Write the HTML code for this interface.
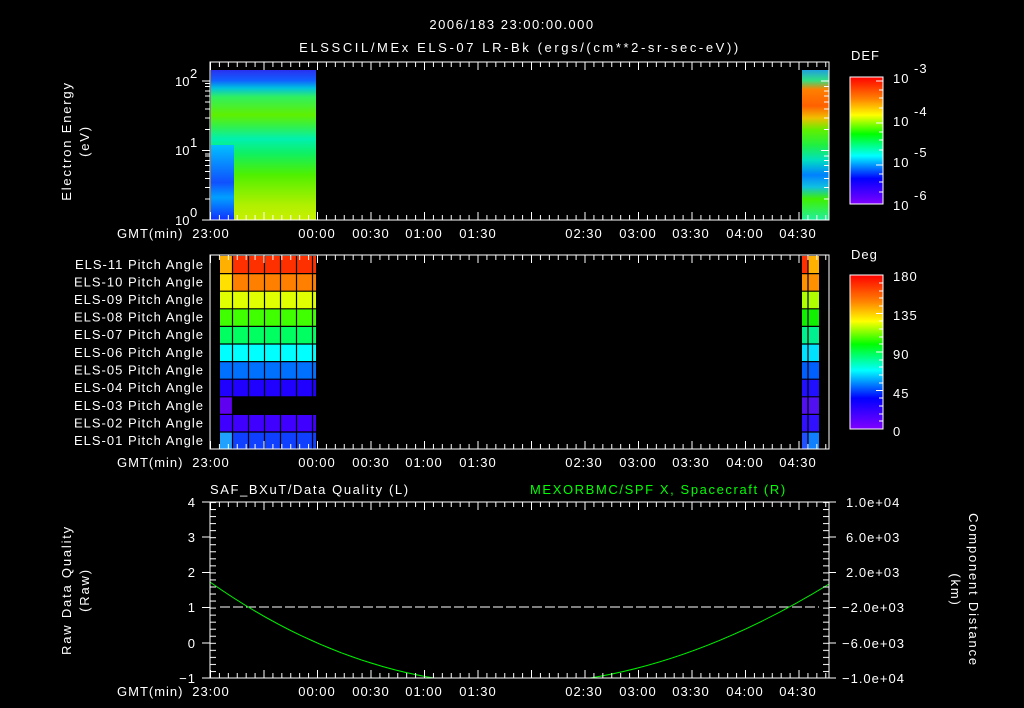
<!DOCTYPE html>
<html><head><meta charset="utf-8"><style>
html,body{margin:0;padding:0;background:#000;width:1024px;height:708px;overflow:hidden}
svg{display:block}
text{font-family:"Liberation Sans",sans-serif;fill:#fff;font-size:13px;letter-spacing:1px}
</style></head><body>
<svg width="1024" height="708" viewBox="0 0 1024 708" xmlns="http://www.w3.org/2000/svg">
<defs>
<pattern id="tkTop" x="210" y="0" width="8.917" height="10" patternUnits="userSpaceOnUse"><line x1="0.5" y1="0" x2="0.5" y2="10" stroke="#fff" stroke-width="1"/></pattern>
<pattern id="tkMaj" x="210" y="0" width="53.5" height="20" patternUnits="userSpaceOnUse"><line x1="0.5" y1="0" x2="0.5" y2="20" stroke="#fff" stroke-width="1"/></pattern>
<pattern id="tkV" x="0" y="502" width="10" height="7.04" patternUnits="userSpaceOnUse"><line x1="0" y1="0.5" x2="10" y2="0.5" stroke="#fff"/></pattern>
<linearGradient id="specL" x1="0" y1="0" x2="0" y2="1">
<stop offset="0" stop-color="#2a30f0"/><stop offset="0.07" stop-color="#1060ff"/><stop offset="0.12" stop-color="#00c0e0"/><stop offset="0.18" stop-color="#30f060"/><stop offset="0.3" stop-color="#60f000"/><stop offset="0.38" stop-color="#30f050"/><stop offset="0.46" stop-color="#00f0b0"/><stop offset="0.56" stop-color="#10f060"/><stop offset="0.7" stop-color="#50f000"/><stop offset="0.9" stop-color="#b0f000"/><stop offset="1" stop-color="#c8f000"/></linearGradient>
<linearGradient id="specS" x1="0" y1="0" x2="0" y2="1"><stop offset="0" stop-color="#00c0ff"/><stop offset="0.5" stop-color="#1050ff"/><stop offset="0.7" stop-color="#00a0ff"/><stop offset="1" stop-color="#1030ff"/></linearGradient>
<linearGradient id="specR" x1="0" y1="0" x2="0" y2="1">
<stop offset="0" stop-color="#20a0e0"/><stop offset="0.07" stop-color="#30e080"/><stop offset="0.13" stop-color="#ff8000"/><stop offset="0.24" stop-color="#ff6000"/><stop offset="0.32" stop-color="#f0c000"/><stop offset="0.4" stop-color="#60f000"/><stop offset="0.5" stop-color="#20f040"/><stop offset="0.6" stop-color="#00e0c0"/><stop offset="0.7" stop-color="#0080ff"/><stop offset="0.78" stop-color="#10c0e0"/><stop offset="0.86" stop-color="#40f000"/><stop offset="1" stop-color="#20f0a0"/></linearGradient>
<linearGradient id="rb" x1="0" y1="0" x2="0" y2="1">
<stop offset="0" stop-color="#ff0000"/><stop offset="0.17" stop-color="#ff8000"/><stop offset="0.3" stop-color="#ffff00"/><stop offset="0.45" stop-color="#00ff00"/><stop offset="0.62" stop-color="#00ffff"/><stop offset="0.8" stop-color="#0000ff"/><stop offset="1" stop-color="#8000ff"/></linearGradient>
<clipPath id="bclip"><rect x="210" y="502" width="619" height="176"/></clipPath>
</defs>

<text x="512" y="29" text-anchor="middle" font-size="17" style="letter-spacing:1.5px">2006/183 23:00:00.000</text>
<text x="520" y="52" text-anchor="middle" font-size="17" style="letter-spacing:2.6px">ELSSCIL/MEx ELS-07 LR-Bk  (ergs/(cm**2-sr-sec-eV))</text>

<rect x="211" y="70" width="105" height="150" fill="url(#specL)"/>
<rect x="211" y="145" width="23" height="75" fill="url(#specS)"/>
<rect x="802" y="70" width="27" height="150" fill="url(#specR)"/>
<rect x="210" y="62" width="619" height="158" fill="none" stroke="#fff"/>
<rect x="210" y="62" width="619" height="5" fill="url(#tkTop)"/>
<rect x="210" y="62" width="619" height="8" fill="url(#tkMaj)"/>
<rect x="210" y="215" width="619" height="5" fill="url(#tkTop)"/>
<rect x="210" y="212" width="619" height="8" fill="url(#tkMaj)"/>
<g stroke="#fff">
<line x1="202" y1="220" x2="210" y2="220"/><line x1="202" y1="150.5" x2="210" y2="150.5"/><line x1="202" y1="81" x2="210" y2="81"/>
<path d="M205 199h5M205 187.5h5M205 178.5h5M205 171.5h5M205 165.5h5M205 160.5h5M205 156h5M205 154h5M205 129.5h5M205 118h5M205 109h5M205 102h5M205 96h5M205 91h5M205 86.5h5M205 83.5h5"/>
<path d="M821 81h8M821 150.5h8M824 129.5h5M824 118h5M824 109h5M824 102h5M824 96h5M824 91h5M824 86.5h5M824 199h5M824 187.5h5M824 178.5h5M824 171.5h5M824 165.5h5M824 160.5h5M824 156h5"/>
</g>
<text x="175" y="225" font-size="13" style="letter-spacing:0">10</text><text x="190" y="217" font-size="9">0</text>
<text x="175" y="155" font-size="13" style="letter-spacing:0">10</text><text x="190" y="147" font-size="9">1</text>
<text x="175" y="86" font-size="13" style="letter-spacing:0">10</text><text x="190" y="78" font-size="9">2</text>
<text transform="translate(71,141) rotate(-90)" text-anchor="middle" font-size="14" style="letter-spacing:1.8px">Electron Energy</text>
<text transform="translate(89,141) rotate(-90)" text-anchor="middle" font-size="14" style="letter-spacing:1.8px">(eV)</text>
<g font-size="13">
<text x="117" y="238">GMT(min)</text>
<text x="211" y="238" text-anchor="middle">23:00</text>
<text x="317" y="238" text-anchor="middle">00:00</text>
<text x="371" y="238" text-anchor="middle">00:30</text>
<text x="424" y="238" text-anchor="middle">01:00</text>
<text x="478" y="238" text-anchor="middle">01:30</text>
<text x="584" y="238" text-anchor="middle">02:30</text>
<text x="638" y="238" text-anchor="middle">03:00</text>
<text x="691" y="238" text-anchor="middle">03:30</text>
<text x="745" y="238" text-anchor="middle">04:00</text>
<text x="798" y="238" text-anchor="middle">04:30</text>
</g>
<text x="851" y="60" font-size="16">DEF</text>
<rect x="850" y="77" width="33" height="127" fill="url(#rb)" stroke="#fff"/>
<g stroke="#fff"><path d="M876 81h7M876 123h7M876 165h7M879 90h4M879 98h4M879 108h4M879 132h4M879 140h4M879 150h4M879 174h4M879 182h4M879 192h4"/></g>
<g font-size="17"><text x="893" y="83">10</text><text x="914" y="73" font-size="11">-3</text>
<text x="893" y="126">10</text><text x="914" y="116" font-size="11">-4</text>
<text x="893" y="167">10</text><text x="914" y="157" font-size="11">-5</text>
<text x="893" y="210">10</text><text x="914" y="200" font-size="11">-6</text></g>

<g>
<rect x="220" y="256" width="96" height="17.6" fill="#ff3000"/>
<rect x="220" y="273.6" width="96" height="17.6" fill="#ff8000"/>
<rect x="220" y="291.2" width="96" height="17.6" fill="#e0ff00"/>
<rect x="220" y="308.8" width="96" height="17.6" fill="#40ff00"/>
<rect x="220" y="326.4" width="96" height="17.6" fill="#00ff60"/>
<rect x="220" y="344" width="96" height="17.6" fill="#00ffff"/>
<rect x="220" y="361.6" width="96" height="17.6" fill="#0070ff"/>
<rect x="220" y="379.2" width="96" height="17.6" fill="#2000ff"/>
<rect x="220" y="396.8" width="12" height="17.6" fill="#6000f0"/>
<rect x="220" y="414.4" width="96" height="17.6" fill="#4000ff"/>
<rect x="220" y="432" width="96" height="17" fill="#1040ff"/>
<rect x="220" y="256" width="12" height="17.6" fill="#ffb000"/>
<rect x="220" y="273.6" width="12" height="17.6" fill="#ffe000"/>
<rect x="220" y="432" width="12" height="17" fill="#20a0ff"/>
<g stroke="#000" stroke-width="1.2"><path d="M232.5 256V449M248.5 256V449M264.5 256V449M280.5 256V449M296.5 256V449M312.5 256V449"/>
<path d="M220 273.6h96M220 291.2h96M220 308.8h96M220 326.4h96M220 344h96M220 361.6h96M220 379.2h96M220 396.8h96M220 414.4h96M220 432h96"/></g>
<rect x="232.6" y="397.4" width="84" height="16.6" fill="#000"/>
</g>
<g>
<rect x="802" y="256" width="17" height="193" fill="#000"/>
<rect x="802" y="256" width="6" height="17.6" fill="#ff3000"/><rect x="808" y="256" width="11" height="17.6" fill="#ffb000"/>
<rect x="802" y="273.6" width="17" height="17.6" fill="#ff9000"/>
<rect x="802" y="291.2" width="17" height="17.6" fill="#b0ff00"/>
<rect x="802" y="308.8" width="17" height="17.6" fill="#10f000"/>
<rect x="802" y="326.4" width="17" height="17.6" fill="#00f090"/>
<rect x="802" y="344" width="17" height="17.6" fill="#00e0ff"/>
<rect x="802" y="361.6" width="17" height="17.6" fill="#0060ff"/>
<rect x="802" y="379.2" width="17" height="17.6" fill="#2010ff"/>
<rect x="802" y="396.8" width="17" height="17.6" fill="#5010f0"/>
<rect x="802" y="414.4" width="17" height="17.6" fill="#3010ff"/>
<rect x="802" y="432" width="6" height="17" fill="#2050ff"/><rect x="808" y="432" width="11" height="17" fill="#1080ff"/>
<g stroke="#000" stroke-width="1.2"><path d="M808 256V449M802 273.6h17M802 291.2h17M802 308.8h17M802 326.4h17M802 344h17M802 361.6h17M802 379.2h17M802 396.8h17M802 414.4h17M802 432h17"/></g>
</g>
<rect x="210" y="255" width="619" height="194" fill="none" stroke="#fff"/>
<rect x="210" y="255" width="619" height="5" fill="url(#tkTop)"/>
<rect x="210" y="255" width="619" height="8" fill="url(#tkMaj)"/>
<rect x="210" y="444" width="619" height="5" fill="url(#tkTop)"/>
<rect x="210" y="441" width="619" height="8" fill="url(#tkMaj)"/>
<g font-size="13" text-anchor="end" style="letter-spacing:1.1px">
<text x="204" y="269">ELS-11 Pitch Angle</text>
<text x="204" y="286.5">ELS-10 Pitch Angle</text>
<text x="204" y="304">ELS-09 Pitch Angle</text>
<text x="204" y="321.5">ELS-08 Pitch Angle</text>
<text x="204" y="339">ELS-07 Pitch Angle</text>
<text x="204" y="357">ELS-06 Pitch Angle</text>
<text x="204" y="374.5">ELS-05 Pitch Angle</text>
<text x="204" y="392">ELS-04 Pitch Angle</text>
<text x="204" y="410">ELS-03 Pitch Angle</text>
<text x="204" y="427.5">ELS-02 Pitch Angle</text>
<text x="204" y="445">ELS-01 Pitch Angle</text>
</g>
<g font-size="13">
<text x="117" y="467">GMT(min)</text>
<text x="211" y="467" text-anchor="middle">23:00</text>
<text x="317" y="467" text-anchor="middle">00:00</text>
<text x="371" y="467" text-anchor="middle">00:30</text>
<text x="424" y="467" text-anchor="middle">01:00</text>
<text x="478" y="467" text-anchor="middle">01:30</text>
<text x="584" y="467" text-anchor="middle">02:30</text>
<text x="638" y="467" text-anchor="middle">03:00</text>
<text x="691" y="467" text-anchor="middle">03:30</text>
<text x="745" y="467" text-anchor="middle">04:00</text>
<text x="798" y="467" text-anchor="middle">04:30</text>
</g>
<text x="851" y="259" font-size="16">Deg</text>
<rect x="850" y="275" width="33" height="154" fill="url(#rb)" stroke="#fff"/>
<g stroke="#fff"><path d="M876 313.5h7M876 352h7M876 390.5h7M879 283h4M879 291h4M879 298h4M879 306h4M879 321h4M879 329h4M879 337h4M879 344h4M879 360h4M879 367h4M879 375h4M879 383h4M879 398h4M879 406h4M879 414h4M879 421h4"/></g>
<g font-size="16"><text x="893" y="281">180</text><text x="893" y="320">135</text><text x="893" y="359">90</text><text x="893" y="398">45</text><text x="893" y="436">0</text></g>

<text x="210" y="494" font-size="15" style="letter-spacing:1.6px">SAF_BXuT/Data Quality (L)</text>
<text x="530" y="494" font-size="15" style="fill:#00ff00;letter-spacing:1.6px">MEXORBMC/SPF X, Spacecraft (R)</text>
<line x1="220" y1="607" x2="819" y2="607" stroke="#fff" stroke-dasharray="10,3"/>
<g clip-path="url(#bclip)"><path d="M210 582 Q 500 786 829 584" fill="none" stroke="#00ee00" stroke-width="1"/></g>
<rect x="210" y="502" width="619" height="176" fill="none" stroke="#fff"/>
<rect x="210" y="502" width="619" height="5" fill="url(#tkTop)"/>
<rect x="210" y="502" width="619" height="8" fill="url(#tkMaj)"/>
<rect x="210" y="673" width="619" height="5" fill="url(#tkTop)"/>
<rect x="210" y="670" width="619" height="8" fill="url(#tkMaj)"/>
<rect x="210" y="502" width="6" height="176" fill="url(#tkV)"/>
<rect x="823" y="502" width="6" height="176" fill="url(#tkV)"/>
<g stroke="#fff"><path d="M202 502h8M202 537h8M202 572.5h8M202 607.5h8M202 643h8M202 678h8M829 502h7M829 537h7M829 572.5h7M829 607.5h7M829 643h7M829 678h7"/></g>
<g font-size="13" text-anchor="end"><text x="196" y="507">4</text><text x="196" y="542">3</text><text x="196" y="577">2</text><text x="196" y="612">1</text><text x="196" y="648">0</text><text x="196" y="683">−1</text></g>
<g font-size="13"><text x="846" y="507">1.0e+04</text><text x="846" y="542">6.0e+03</text><text x="846" y="577">2.0e+03</text><text x="842" y="612">−2.0e+03</text><text x="842" y="648">−6.0e+03</text><text x="842" y="683">−1.0e+04</text></g>
<text transform="translate(71,590) rotate(-90)" text-anchor="middle" font-size="14" style="letter-spacing:1.8px">Raw Data Quality</text>
<text transform="translate(89,590) rotate(-90)" text-anchor="middle" font-size="14" style="letter-spacing:1.8px">(Raw)</text>
<text transform="translate(969,590) rotate(90)" text-anchor="middle" font-size="14" style="letter-spacing:1.8px">Component Distance</text>
<text transform="translate(951,590) rotate(90)" text-anchor="middle" font-size="14" style="letter-spacing:1.8px">(km)</text>
<g font-size="13">
<text x="117" y="696">GMT(min)</text>
<text x="211" y="696" text-anchor="middle">23:00</text>
<text x="317" y="696" text-anchor="middle">00:00</text>
<text x="371" y="696" text-anchor="middle">00:30</text>
<text x="424" y="696" text-anchor="middle">01:00</text>
<text x="478" y="696" text-anchor="middle">01:30</text>
<text x="584" y="696" text-anchor="middle">02:30</text>
<text x="638" y="696" text-anchor="middle">03:00</text>
<text x="691" y="696" text-anchor="middle">03:30</text>
<text x="745" y="696" text-anchor="middle">04:00</text>
<text x="798" y="696" text-anchor="middle">04:30</text>
</g>
</svg>
</body></html>
